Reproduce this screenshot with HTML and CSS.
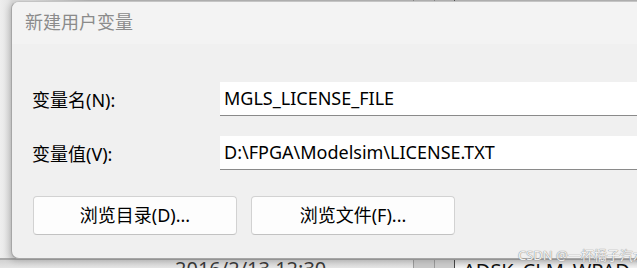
FILE: index.html
```html
<!DOCTYPE html>
<html>
<head>
	<title>新建用户变量</title>
	<link rel="stylesheet" href="styles.css">
</head>
<body>
	<div class="desk">
		<div class="top-strip">
			<span class="col-line line-a"></span>
			<span class="col-line line-b"></span>
			<span class="col-line line-c"></span>
		</div>
		<div class="dialog">
			<div class="title">新建用户变量</div>
			<div class="content">
				<div class="row">
					<div class="label">变量名(N):</div>
					<div class="field">MGLS_LICENSE_FILE</div>
				</div>
				<div class="row">
					<div class="label">变量值(V):</div>
					<div class="field">D:\FPGA\Modelsim\LICENSE.TXT</div>
				</div>
				<div class="buttons">
					<div class="btn">浏览目录(D)...</div>
					<div class="btn">浏览文件(F)...</div>
				</div>
			</div>
		</div>
		<div class="under">
			<div class="under-left"><span class="date">2016/2/13 12:30</span></div>
			<div class="under-mid"></div>
			<div class="under-cell"></div>
			<div class="under-right"><span class="var-name">ADSK_CLM_WPAD_PROXY_CHECK</span></div>
		</div>
		<div class="watermark">CSDN @一杯橘子汽水</div>
	</div>
</body>
</html>
```

FILE: styles.css
```css
html, body {
	margin: 0;
	padding: 0;
	width: 637px;
	height: 268px;
	overflow: hidden;
}
body {
	background: #e9e9e9;
	font-family: 'Noto Sans', 'Noto Sans CJK SC', sans-serif;
}
.desk {
	position: relative;
	width: 637px;
	height: 268px;
	overflow: hidden;
	background: linear-gradient(to right, #eeeeee 0, #e6e6e6 8px, #dcdcdc 12px);
}
.top-strip {
	position: relative;
	height: 2px;
	margin-left: 30px;
	background: linear-gradient(to right, #dedede, #b5b5b5 60px);
}
.col-line {
	position: absolute;
	top: 0;
	width: 1px;
	height: 2px;
	background: #8a8a8a;
}
.line-a { left: 383px; }
.line-b { left: 404px; }
.line-c { left: 424px; background: #555; }

.dialog {
	position: relative;
	z-index: 1;
	margin-left: 11px;
	width: 640px;
	border: 1px solid #a6a6a6;
	border-right: none;
	border-top-color: #c4c4c4;
	border-radius: 8px 0 0 8px;
	background: #f0f0f0;
	box-shadow: -2px 2px 6px rgba(0, 0, 0, 0.18);
	margin-top: -1px;
	overflow: hidden;
}
.title {
	height: 42px;
	padding-left: 13px;
	background: #f3f3f3;
	color: #8b8b8b;
	font-size: 18px;
	line-height: 40px;
}
.content {
	padding: 38px 0 23px 0;
}
.row {
	display: flex;
	align-items: center;
	height: 34px;
	margin-bottom: 20px;
}
.label {
	width: 208px;
	flex-shrink: 0;
	padding-left: 20px;
	font-size: 18px;
	color: #000;
	box-sizing: border-box;
}
.field {
	flex: 1;
	height: 34px;
	box-sizing: border-box;
	background: #fff;
	border-bottom: 1px solid #8a8a8a;
	padding-left: 4px;
	font-size: 18px;
	line-height: 32px;
	color: #000;
	white-space: nowrap;
}
.buttons {
	display: flex;
	gap: 14px;
	padding-left: 21px;
	margin-top: 26px;
}
.btn {
	width: 204px;
	height: 39px;
	box-sizing: border-box;
	border: 1px solid #d2d2d2;
	border-bottom-color: #c2c2c2;
	border-radius: 4px;
	background: #fdfdfd;
	text-align: center;
	font-size: 18px;
	line-height: 36px;
	color: #000;
}

.under {
	display: flex;
	height: 12px;
	margin-top: -1px;
	overflow: hidden;
	border-top: 2px solid #a9a9a9;
}
.under-left {
	width: 413px;
	flex-shrink: 0;
	background: linear-gradient(to bottom, #d2d2d2, #e4e4e4 8px);
	overflow: hidden;
}
.under-mid {
	width: 20px;
	flex-shrink: 0;
	border-left: 1px solid #9a9a9a;
	background: #c8c8c8;
}
.under-cell {
	width: 19px;
	flex-shrink: 0;
	border-left: 1px solid #9a9a9a;
	border-right: 1px solid #444;
	background: #cbcbcb;
}
.under-right {
	flex: 1;
	min-width: 0;
	overflow: hidden;
	background: linear-gradient(to bottom, #d0d0d0, #f2f2f2 8px);
}
.date {
	display: block;
	margin-left: 175px;
	margin-top: -1px;
	font-size: 20px;
	line-height: 20px;
	color: #3a3a3a;
	white-space: nowrap;
}
.var-name {
	display: block;
	margin-left: 8px;
	margin-top: 0;
	font-size: 20px;
	line-height: 22px;
	color: #111;
	white-space: nowrap;
}
.watermark {
	position: absolute;
	z-index: 2;
	left: 518px;
	top: 245px;
	font-size: 13px;
	color: rgba(255, 255, 255, 0.9);
	text-shadow: 0 0 1px #8a8a8a, 0 0 1px #8a8a8a;
	white-space: nowrap;
}
```
